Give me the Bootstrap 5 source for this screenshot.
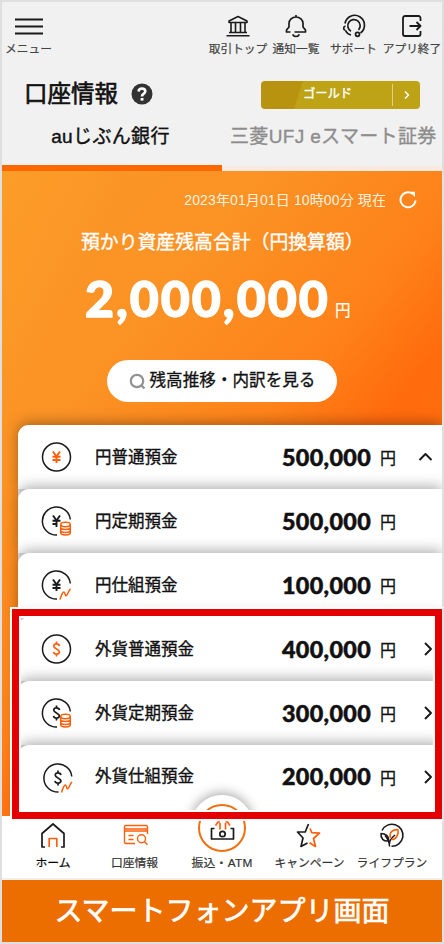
<!DOCTYPE html>
<html lang="ja">
<head>
<meta charset="utf-8">
<meta name="viewport" content="width=device-width, initial-scale=1">
<title>口座情報</title>
<link href="https://cdn.jsdelivr.net/npm/bootstrap@5.3.0/dist/css/bootstrap.min.css" rel="stylesheet">
<style>
body{font-family:"Liberation Sans","Noto Sans CJK JP",sans-serif;color:#111;background:#dfdfdf;line-height:1}
svg{display:block;flex:none;fill:none;stroke-linecap:butt;stroke-linejoin:round}
.phone{width:444px;height:944px;padding:2px;background:#dfdfdf}
.k{stroke:#1a1a1a}.o{stroke:#fd5f0a}
.jp{white-space:nowrap;font-weight:400}
.topbar{display:grid;grid-template-columns:53px 1fr 58px 58px 57px 60px;height:64px;background:#f1f1f1}
.topbar .tool{padding-top:11px;gap:5px;font-size:11.7px;color:#444;-webkit-text-stroke:.2px #444}
.heading{height:56px;background:#f1f1f1;padding:0 22px 1px 22px}
.heading h1{font-size:23.5px;line-height:30px;-webkit-text-stroke:.65px #111}
.heading .help{margin-left:13px}
.gold{width:159px;height:28px;margin-top:2px;border-radius:4px;background:linear-gradient(108deg,#b8930f 0 24.5%,#bda315 25.5%);color:#fff;font-size:12.3px}
.gold .gold-name{padding-left:2px;-webkit-text-stroke:.4px #fff}
.gold .chev{width:28px;height:22px;border-left:1px solid #ded28a}
.tabs{height:49px;background:#f1f1f1}
.tabs .tab{height:49px;font-size:19px;padding-top:3px;line-height:24px}
.tabs .tab-on{width:220px;border-bottom:6px solid #ff6700;letter-spacing:.35px;padding-right:3px;-webkit-text-stroke:.4px #111}
.tabs .tab-off{width:220px;border-bottom:5px solid #f8e9e1;color:#8d8d8d;padding-left:8px;letter-spacing:.35px;-webkit-text-stroke:.35px #8d8d8d}
.hero{height:645px;background:linear-gradient(116deg,rgba(255,175,45,.25) 0,rgba(255,165,40,.2) 12%,rgba(255,150,40,0) 17%),linear-gradient(130deg,#fb9627 0,#fb9325 26%,#fe8219 48%,#ff6b0d 60%,#ff6d0d 68%,#ff7a16 100%);color:#fff}
.stamp{height:58px;font-size:14px;color:#fff0df;padding-right:25px}
.stamp span{letter-spacing:.12px}
.stamp svg{margin-left:13px}
.total-label{font-size:18.85px;line-height:28px;padding-left:79px;-webkit-text-stroke:.35px #fff}
.num{font-family:Lato,sans-serif;font-weight:900;-webkit-text-stroke:.5px currentColor}
.total{height:80px;padding:2px 0 0 83px}
.total .num{font-size:50px;width:246px;letter-spacing:2px;-webkit-text-stroke:1.4px currentColor}
.total .yen{font-size:15.5px;padding-top:25px;-webkit-text-stroke:.2px #fff}
.pill{width:230px;height:42px;border-radius:21px;background:#fff;color:#111;font-size:16.6px;margin:23px 0 0 105px;-webkit-text-stroke:.3px #111}
.pill span{padding-top:1px}
.accounts{margin:23px 0 0 16px;color:#111;background:#f0f0f0;border-radius:11px 0 0 0}
.acct{height:64px;border-radius:11px 0 0 0;background:#fff;box-shadow:0 -2px 14px rgba(0,0,0,.34);padding:0 0 0 22px}
.acct.last-row{height:72px;padding-bottom:9px}
.acct .name{font-size:16.5px;padding-left:19px;width:206px;-webkit-text-stroke:.35px #111}
.acct .num{font-size:23.3px;width:92px;letter-spacing:.35px;padding-top:1px}
.acct .yen{font-size:16px;width:34px;padding-left:6px;padding-top:4px;-webkit-text-stroke:.3px #111}
.acct svg.chev{margin-left:9px}
.frame{position:absolute;left:10px;top:607px;width:434px;height:214px;border:2px solid #fff;border-right-color:transparent}
.frame div{width:430px;height:210px;border:7px solid #e50000;box-shadow:inset 0 0 0 2px #fff}
.tabbar{display:grid;grid-template-columns:84px 79px 96px 79px 86px;height:64px;padding:0 7px 0 9px;background:#fff;border-bottom:2px solid #f0f0f0;color:#333}
.tabbar .item{font-size:11.8px;padding-top:4px}
.tabbar .item .jp{line-height:16px;margin-top:5px;-webkit-text-stroke:.2px currentColor}
.tabbar .item .jp.atm{margin-top:3px;letter-spacing:.3px}
.orb{position:absolute;top:-21px;left:189px;width:62px;height:62px;border-radius:50%;background:#fff;box-shadow:0 -2px 12px rgba(0,0,0,.35);clip-path:inset(-14px -14px 38px -14px)}
.ringico{position:absolute;top:-14px;left:195px}
.caption-bar{height:62px;background:#ec6d00;color:#fff;font-size:28px;-webkit-text-stroke:.7px #fff;padding-top:2px}
</style>
<script src="https://cdn.jsdelivr.net/npm/bootstrap@5.3.0/dist/js/bootstrap.bundle.min.js"></script>
</head>
<body>
<main class="phone position-relative overflow-hidden">
  <header class="topbar">
    <div class="tool d-flex flex-column align-items-center"><svg width="30" height="25" class="k" stroke-width="1.8"><path d="M1 6.500h28M1 13.500h28M1 20.500h28"/></svg><span class="jp">メニュー</span></div>
    <span></span>
    <div class="tool d-flex flex-column align-items-center"><svg width="26" height="25" class="k" stroke-width="1.6"><path d="M4 9.500V8L13 3.500 22 8v1.500zM6 9.500v10M10.500 9.500v10M15.500 9.500v10M20 9.500v10M4 19.500h18M1.500 22.800h23"/></svg><span class="jp">取引トップ</span></div>
    <div class="tool d-flex flex-column align-items-center"><svg width="26" height="25" class="k" stroke-width="1.7"><path d="M13 2v2.500M7.500 19H3.500v-2L6 14v-3.500a7 6.500 0 0 1 14 0V14l2.500 3v2H11.500M10 21.300a3 2.200 0 0 0 6 0"/></svg><span class="jp">通知一覧</span></div>
    <div class="tool d-flex flex-column align-items-center"><svg width="26" height="25" class="k" stroke-width="1.7"><path d="M4 10.500a9.800 9.800 0 1 1 15.500 9.500M10 18.200a6.200 6.200 0 1 1 7.500-1.200M4.500 13a2.300 2.300 0 0 0 0 4.500M4.500 17.500q1.500 3.500 5.500 4.500"/><circle cx="16.500" cy="21.300" r="2"/></svg><span class="jp">サポート</span></div>
    <div class="tool d-flex flex-column align-items-center"><svg width="26" height="25" class="k" stroke-width="1.8"><path d="M21.500 8V5a2 2 0 0 0-2-2H6a2 2 0 0 0-2 2v16a2 2 0 0 0 2 2h13.500a2 2 0 0 0 2-2v-3M10.500 13H21M17.500 9l4 4-4 4"/></svg><span class="jp">アプリ終了</span></div>
  </header>

  <section class="heading d-flex align-items-center">
    <h1 class="jp m-0">口座情報</h1>
    <svg class="help" width="22" height="22"><circle cx="11" cy="11" r="10.500" fill="#333"/><path d="M7.500 8.500Q7.800 5.500 11 5.500t3.300 2.800Q14.300 10 12.500 11 11 11.800 11 13.500" stroke="#fff" stroke-width="2.600"/><path d="M9.600 15h2.900v2.600H9.600z" fill="#fff"/></svg>
    <div class="gold d-flex align-items-center ms-auto"><span class="gold-name flex-grow-1 text-center jp">ゴールド</span><span class="chev d-flex align-items-center justify-content-center"><svg width="8" height="10" stroke="#fff" stroke-width="1.500"><path d="M2 1.500 5.500 5 2 8.500"/></svg></span></div>
  </section>

  <nav class="tabs d-flex">
    <div class="tab tab-on jp text-center">auじぶん銀行</div>
    <div class="tab tab-off jp">三菱UFJ eスマート証券</div>
  </nav>

  <section class="hero overflow-hidden">
    <div class="stamp d-flex align-items-center justify-content-end"><span class="jp">2023年01月01日 10時00分 現在</span><svg width="18" height="18" stroke="#fff" stroke-width="2"><path d="M13.500 2.800A7.500 7.500 0 1 0 16.500 9.500"/><path d="M11 .8h5v5.500z" fill="#fff" stroke="none"/></svg></div>
    <div class="total-label jp">預かり資産残高合計（円換算額）</div>
    <div class="total d-flex align-items-center"><span class="num">2,000,000</span><span class="yen jp ms-1">円</span></div>
    <div class="pill jp d-flex align-items-center justify-content-center gap-1"><svg width="17" height="17" stroke="#929292" stroke-width="2.200"><circle cx="8" cy="8" r="6.200"/><path d="M12 12l3.500 3.500"/></svg><span>残高推移・内訳を見る</span></div>
    <div class="accounts">
      <div class="acct d-flex align-items-center position-relative"><svg width="36" height="36" class="k" stroke-width="1.500"><circle cx="16.500" cy="18" r="14"/><path class="o" stroke-width="1.900" d="M13 12.500l3.500 5 3.500-5M16.500 17.500V24M12.500 17.800h8M12.500 21h8"/></svg><span class="name jp">円普通預金</span><span class="num">500,000</span><span class="yen jp">円</span><svg class="chev k" width="16" height="16" stroke-width="2"><path d="M2.500 11 8.500 5l6 6"/></svg></div>
      <div class="acct d-flex align-items-center position-relative"><svg width="36" height="36" class="k" stroke-width="1.500"><path d="M30.300 16.500A14 14 0 1 0 17 32"/><path stroke-width="1.900" d="M13 12.500l3.500 5 3.500-5M16.500 17.500V24M12.500 17.800h8M12.500 21h5"/><g class="o"><ellipse cx="25.500" cy="21.500" rx="4.800" ry="2.200"/><path d="M20.700 21.500v8.300a4.800 2.200 0 0 0 9.600 0v-8.300M20.700 24.300a4.800 2.200 0 0 0 9.600 0M20.700 27.300a4.800 2.200 0 0 0 9.600 0"/></g></svg><span class="name jp">円定期預金</span><span class="num">500,000</span><span class="yen jp">円</span></div>
      <div class="acct d-flex align-items-center position-relative"><svg width="36" height="36" class="k" stroke-width="1.500"><path d="M30.300 16.500A14 14 0 1 0 17 32"/><path stroke-width="1.900" d="M13 12.500l3.500 5 3.500-5M16.500 17.500V24M12.500 17.800h8M12.500 21h8"/><path class="o" d="M20 32.500q2.500-8 4-7.500c1.500 1 1 4.500 2.500 3.500s2-6 4.200-6.500"/></svg><span class="name jp">円仕組預金</span><span class="num">100,000</span><span class="yen jp">円</span></div>
      <div class="acct d-flex align-items-center position-relative"><svg width="36" height="36" class="k" stroke-width="1.500"><circle cx="16.500" cy="18" r="14"/><path class="o" stroke-width="1.700" d="M19.500 15q-.5-2.200-3-2.200t-2.800 2.200q0 1.600 2.800 2.900t3 3q-.4 2.300-3 2.300t-3-2.300M16.500 10.500v2.300M16.500 23v2.500"/></svg><span class="name jp">外貨普通預金</span><span class="num">400,000</span><span class="yen jp">円</span><svg class="chev k" width="16" height="16" stroke-width="1.900"><path d="M8 2l6 6-6 6"/></svg></div>
      <div class="acct d-flex align-items-center position-relative"><svg width="36" height="36" class="k" stroke-width="1.500"><path d="M30.300 16.500A14 14 0 1 0 17 32"/><path stroke-width="1.700" d="M19.500 15q-.5-2.200-3-2.200t-2.800 2.200q0 1.600 2.800 2.900t3 3q-.4 2.300-3 2.300t-3-2.300M16.500 10.500v2.300M16.500 23v2.500"/><g class="o"><ellipse cx="25.500" cy="21.500" rx="4.800" ry="2.200"/><path d="M20.700 21.500v8.300a4.800 2.200 0 0 0 9.600 0v-8.300M20.700 24.300a4.800 2.200 0 0 0 9.600 0M20.700 27.300a4.800 2.200 0 0 0 9.600 0"/></g></svg><span class="name jp">外貨定期預金</span><span class="num">300,000</span><span class="yen jp">円</span><svg class="chev k" width="16" height="16" stroke-width="1.900"><path d="M8 2l6 6-6 6"/></svg></div>
      <div class="acct last-row d-flex align-items-center position-relative"><svg width="36" height="36" viewBox="-1.500 -1 36 36" class="k" stroke-width="1.500"><path d="M30.300 16.500A14 14 0 1 0 17 32"/><path stroke-width="1.700" d="M19.500 15q-.5-2.200-3-2.200t-2.800 2.200q0 1.600 2.800 2.900t3 3q-.4 2.300-3 2.300t-3-2.300M16.500 10.500v2.300M16.500 23v2.500"/><path class="o" d="M20 32.500q2.500-8 4-7.500c1.500 1 1 4.500 2.500 3.500s2-6 4.200-6.500"/></svg><span class="name jp">外貨仕組預金</span><span class="num">200,000</span><span class="yen jp">円</span><svg class="chev k" width="16" height="16" stroke-width="1.900"><path d="M8 2l6 6-6 6"/></svg></div>
    </div>
  </section>

  <nav class="tabbar position-relative">
    <div class="orb"></div>
    <svg class="ringico k" width="50" height="50" stroke-width="1.700"><circle cx="25" cy="26" r="23" stroke="#f0700f" stroke-width="2"/><path d="M17.500 26.500h-3V37h22V26.500h-3"/><circle cx="25.500" cy="32" r="2.700"/><path class="o" stroke-width="1.700" d="M23 27.500v-6.500M18.500 23.500l2.500-3.500h2M28.500 27.500v-6.500M33 23.500L30.500 20h-2"/></svg>
    <div class="item d-flex flex-column align-items-center text-black"><svg width="28" height="30" class="k" stroke-width="1.700"><path d="M6 27H3V13.500L14 4l11 9.500V27h-3"/><path class="o" d="M10.200 27v-8.500h7.600V27"/></svg><span class="jp">ホーム</span></div>
    <div class="item d-flex flex-column align-items-center"><svg width="28" height="30" class="o" stroke-width="1.400"><path d="M14 23.500H5a1.500 1.500 0 0 1-1.500-1.500V7A1.500 1.500 0 0 1 5 5.500h20A1.500 1.500 0 0 1 26.500 7v7M3.500 9h23M3.500 11h23M7.500 15.500h5M7.500 19.500h5"/><circle cx="20.500" cy="18.800" r="4"/><path d="M23.500 21.800l3 3"/></svg><span class="jp">口座情報</span></div>
    <div class="item d-flex flex-column align-items-center"><div class="pt-4 pb-2"></div><span class="jp atm">振込・ATM</span></div>
    <div class="item d-flex flex-column align-items-center"><svg width="28" height="30" class="k" stroke-width="1.700"><path d="M12.500 4l-3.300 8H1.500l5.500 6-2 8.500 6.500-3.500"/><path class="o" d="M14 8.500l1.800 4.200 7.700.5-6 5.300 2 8-6-3.800"/></svg><span class="jp">キャンペーン</span></div>
    <div class="item d-flex flex-column align-items-center"><svg width="28" height="30" class="k" stroke-width="1.600"><path d="M4 10.500a11 11 0 1 1 9.500 15.700M11.500 26.500q0-6-4.500-11M11.500 24q-.5-4 5.500-9"/><path d="M10.500 21C5.500 21.500 2.500 18.500 3 13.500c4.500 0 8 2.500 7.500 7.500z"/><path class="o" d="M12.500 18c-2-6 3-8.800 7.500-8.300 1 5.500-2.500 9.800-6.500 9.800"/></svg><span class="jp">ライフプラン</span></div>
  </nav>

  <footer class="caption-bar position-relative d-flex align-items-center justify-content-center jp">スマートフォンアプリ画面</footer>
  <div class="frame"><div></div></div>
</main>
</body>
</html>
